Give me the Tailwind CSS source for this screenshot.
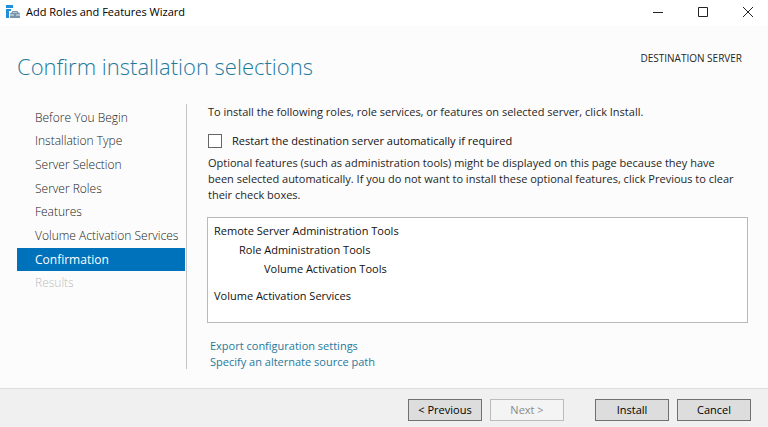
<!DOCTYPE html>
<html lang="en">
<head>
  <meta charset="UTF-8">
  <meta name="viewport" content="width=device-width, initial-scale=1.0">
  <title>Add Roles and Features Wizard</title>
  <script src="https://cdn.jsdelivr.net/npm/@tailwindcss/browser@4"></script>
</head>
<body class="min-h-screen flex flex-col bg-[#fcfcfc] text-[#262626] text-[11px] leading-4 font-['Open_Sans','Noto_Sans',sans-serif]">

  <!-- Title bar -->
  <header class="flex items-center h-[26px] pb-[2px] bg-white text-black">
    <svg class="ml-[5px] mr-1 w-4 h-4" viewBox="0 0 16 16">
      <path fill="#1e8fd8" d="M1 1h7v3H1zM1 5h5v2H4v7H1z"/>
      <path fill="none" stroke="#7893aa" d="M7.500 9V7.500h5V9"/>
      <path fill="#7893aa" d="M6 8.500h8l1 1V14H5V9.500z"/>
      <path stroke="#e6edf2" d="M5 11h4M11 11h4"/>
    </svg>
    <span class="flex-1 pl-px">Add Roles and Features Wizard</span>
    <div class="flex gap-[5px]">
      <button class="w-10 h-[22px] flex items-center justify-center" aria-label="Minimize">
        <svg class="w-3 h-3" viewBox="0 0 12 12" fill="none" stroke="#222"><path d="M1 6.500h10"/></svg>
      </button>
      <button class="w-10 h-[22px] flex items-center justify-center" aria-label="Maximize">
        <svg class="w-3 h-3" viewBox="0 0 12 12" fill="none" stroke="#222"><path d="M1.500 1.500h9v9h-9z"/></svg>
      </button>
      <button class="w-10 h-[22px] flex items-center justify-center" aria-label="Close">
        <svg class="w-3 h-3" viewBox="0 0 12 12" fill="none" stroke="#222"><path d="M1 1l10 10M11 1L1 11"/></svg>
      </button>
    </div>
  </header>

  <!-- Page heading -->
  <div class="flex justify-between items-start h-[78px] pl-[17px] pr-[26px] pt-6">
    <h1 class="text-[22px] leading-8 font-light text-[#1f7a9c]">Confirm installation selections</h1>
    <span class="text-[10px] leading-4">DESTINATION SERVER</span>
  </div>

  <div class="flex-1 flex">
    <!-- Steps -->
    <nav class="w-[170px] ml-[17px] shrink-0 pt-[2px] mb-[19px] border-r border-[#c4c4c4] text-[12px] font-light text-[#222]">
      <ul class="grid auto-rows-fr h-[189px] mr-px whitespace-nowrap">
        <li class="flex items-center pl-[18px]">Before You Begin</li>
        <li class="flex items-center pl-[18px]">Installation Type</li>
        <li class="flex items-center pl-[18px]">Server Selection</li>
        <li class="flex items-center pl-[18px]">Server Roles</li>
        <li class="flex items-center pl-[18px]">Features</li>
        <li class="flex items-center pl-[18px]">Volume Activation Services</li>
        <li class="flex items-center pl-[18px] bg-[#0072bc] font-normal text-white" aria-current="step">Confirmation</li>
        <li class="flex items-center pl-[18px] text-[#bdbdbd]">Results</li>
      </ul>
    </nav>

    <!-- Confirmation page -->
    <main class="flex-1 px-5">
      <p class="pl-px">To install the following roles, role services, or features on selected server, click Install.</p>
      <label class="flex items-center mt-[13px] pl-px text-[#111]">
        <input type="checkbox" class="appearance-none w-[14px] h-[14px] mr-[10px] bg-white border border-[#666]">
        Restart the destination server automatically if required
      </label>
      <p class="mt-[6px] pl-px">
        Optional features (such as administration tools) might be displayed on this page because they have<br>
        been selected automatically. If you do not want to install these optional features, click Previous to clear<br>
        their check boxes.
      </p>

      <div class="mt-[14px] h-[106px] px-[6px] pt-[3px] bg-white border border-[#b9b9b9] text-[#111]">
        <ul class="leading-[19px]">
          <li>Remote Server Administration Tools
            <ul class="pl-[25px]">
              <li>Role Administration Tools
                <ul class="pl-[25px]">
                  <li>Volume Activation Tools</li>
                </ul>
              </li>
            </ul>
          </li>
          <li class="mt-2">Volume Activation Services</li>
        </ul>
      </div>

      <div class="mt-[15px] pl-[3px] flex flex-col items-start text-[#1f7a9c]">
        <a href="#">Export configuration settings</a>
        <a href="#">Specify an alternate source path</a>
      </div>
    </main>
  </div>

  <!-- Wizard buttons -->
  <footer class="flex justify-end gap-2 h-[39px] pt-[10px] pr-[17px] bg-[#f0f0f0] border-t border-[#dedede] text-black">
    <button class="w-[74px] h-[22px] bg-[#dddddd] border border-[#707070]">&lt; Previous</button>
    <button class="w-[74px] h-[22px] mr-[23px] bg-[#f4f4f4] border border-[#b9bcbf] text-[#8a8a8a]" disabled>Next &gt;</button>
    <button class="w-[74px] h-[22px] bg-[#dddddd] border border-[#707070]">Install</button>
    <button class="w-[74px] h-[22px] bg-[#dddddd] border border-[#707070]">Cancel</button>
  </footer>

</body>
</html>
